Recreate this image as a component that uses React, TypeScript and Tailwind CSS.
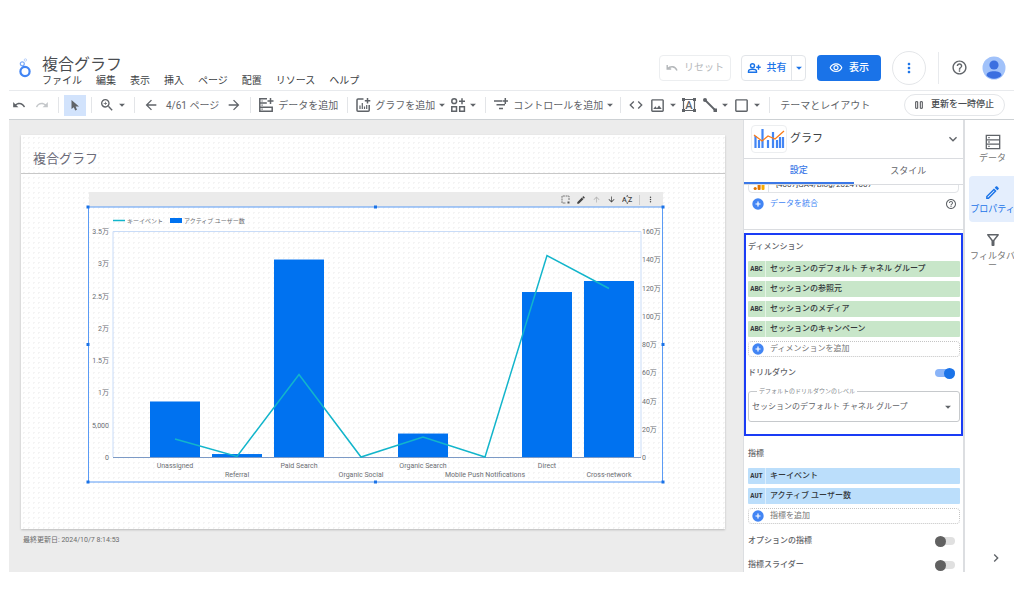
import { ReactNode, useState } from "react";
import {
  MdAdd,
  MdArrowBack,
  MdArrowDownward,
  MdArrowDropDown,
  MdArrowForward,
  MdArrowUpward,
  MdCheckBoxOutlineBlank,
  MdCode,
  MdEdit,
  MdHelpOutline,
  MdKeyboardArrowDown,
  MdKeyboardArrowRight,
  MdMoreVert,
  MdOutlineEdit,
  MdOutlineFilterAlt,
  MdOutlineImage,
  MdOutlineVisibility,
  MdRedo,
  MdUndo,
  MdZoomIn,
} from "react-icons/md";

const menus = ["ファイル", "編集", "表示", "挿入", "ページ", "配置", "リソース", "ヘルプ"];

const dimensions = [
  "セッションのデフォルト チャネル グループ",
  "セッションの参照元",
  "セッションのメディア",
  "セッションのキャンペーン",
];

const metrics = ["キーイベント", "アクティブ ユーザー数"];

// users は万単位
const channels = [
  { name: "Unassigned", users: 39.3, events: 2790 },
  { name: "Referral", users: 2.1, events: 80 },
  { name: "Paid Search", users: 139.8, events: 12780 },
  { name: "Organic Social", users: 0, events: 0 },
  { name: "Organic Search", users: 16.6, events: 3100 },
  { name: "Mobile Push Notifications", users: 0, events: 0 },
  { name: "Direct", users: 116.8, events: 31200 },
  { name: "Cross-network", users: 124.6, events: 26100 },
];

const leftTicks = ["0", "5,000", "1万", "1.5万", "2万", "2.5万", "3万", "3.5万"];
const rightTicks = ["0", "20万", "40万", "60万", "80万", "100万", "120万", "140万", "160万"];

function Logo() {
  return (
    <svg viewBox="0 0 14 20" className="h-5 w-3.5 shrink-0" fill="none" stroke="#4285f4">
      <circle cx="7" cy="13.5" r="4.6" strokeWidth="2.2" />
      <circle cx="4.3" cy="5.8" r="2" strokeWidth="1.2" stroke="#7baaf7" />
      <circle cx="7.4" cy="2" r="1.2" strokeWidth="0.8" stroke="#a8c7fa" />
      <path d="M4.8 8 6 9.6" strokeWidth="1.2" />
    </svg>
  );
}

function AddDataIcon() {
  return (
    <svg viewBox="0 0 16 16" className="size-4" fill="none" stroke="#5f6368" strokeWidth="1.5">
      <path d="M9 1.8H1.8v12.5h12.4V9.5M1.8 6h7M1.8 10.2h12.4M12.5 1v6M9.5 4h6" />
      <path d="M3.5 4h1.2M3.5 8.1h1.2M3.5 12.2h1.2" strokeWidth="1.2" />
    </svg>
  );
}

function AddChartIcon() {
  return (
    <svg viewBox="0 0 16 16" className="size-4" fill="none" stroke="#5f6368" strokeWidth="1.5">
      <path d="M8.5 2H3a1 1 0 0 0-1 1v10.2a1 1 0 0 0 1 1h10.2a1 1 0 0 0 1-1V8M12.5 1v5.5M9.8 3.8h5.5" />
      <path d="M5 12V8.5M7.3 12V6M9.5 12V9.5M11.7 12V8" strokeWidth="1.2" />
    </svg>
  );
}

function CommunityIcon() {
  return (
    <svg viewBox="0 0 16 16" className="size-4" fill="none" stroke="#5f6368" strokeWidth="1.5">
      <circle cx="4.2" cy="4.2" r="2.4" />
      <path d="M12 1.3v6M9 4.3h6M1.8 9.8h4.7v4.5H1.8zM9.7 9.8h4.7v4.5H9.7z" />
    </svg>
  );
}

function ControlIcon() {
  return (
    <svg viewBox="0 0 16 16" className="size-4" fill="none" stroke="#5f6368" strokeWidth="1.5">
      <path d="M1 4h8M3.5 7.8H12M6 11.6h4M12.3 1v6M9.5 4H15" />
    </svg>
  );
}

function TextBoxIcon() {
  return (
    <svg viewBox="0 0 16 16" className="size-4" fill="#5f6368">
      <path d="M2.5 2.5h11v11h-11z" fill="none" stroke="#5f6368" strokeWidth="1.2" />
      <path d="M1 1h3v3H1zM12 1h3v3h-3zM1 12h3v3H1zM12 12h3v3h-3z" />
      <text x="8" y="12" textAnchor="middle" className="text-[11px] font-medium">
        A
      </text>
    </svg>
  );
}

function LineIcon() {
  return (
    <svg viewBox="0 0 16 16" className="size-4" fill="#5f6368">
      <path d="m3 3 10 10" stroke="#5f6368" strokeWidth="1.8" />
      <circle cx="3" cy="3" r="2" />
      <path d="M11.5 11.5H15V15h-3.5z" />
    </svg>
  );
}

function SortIcon() {
  return (
    <svg viewBox="0 0 11 9" className="h-[9px] w-[11px]" fill="currentColor">
      <text x="0" y="7" className="text-[7px] font-medium">
        A
      </text>
      <text x="6" y="7" className="text-[7px] font-medium">
        Z
      </text>
      <path d="M4 1.5 5.3 0l1.3 1.5zM4 7.5 5.3 9l1.3-1.5z" />
    </svg>
  );
}

function ComboIcon() {
  return (
    <svg viewBox="0 0 34 26" className="h-[26px] w-[34px]" fill="none">
      <path
        d="M3.5 22V10M7 22v-8M10.5 22V3M16 22v-8M21 22V6M25 22v-8M28 22V11M31 22V11"
        stroke="#4285f4"
        strokeWidth="2.2"
      />
      <path d="m2 9 8 6 6-5 7 3 9-8" stroke="#fa7b17" strokeWidth="1.3" />
    </svg>
  );
}

function ServerIcon() {
  return (
    <svg viewBox="0 0 16 16" className="size-4" fill="none" stroke="#5f6368" strokeWidth="1.3">
      <path d="M1.3 1.3h13.4v13.4H1.3zM1.3 5.8h13.4M1.3 10.2h13.4" />
      <path d="M3.3 3.6h1.4M3.3 8h1.4M3.3 12.4h1.4" />
    </svg>
  );
}

function Avatar() {
  return (
    <svg viewBox="0 0 24 24" className="size-6">
      <circle cx="12" cy="12" r="11.5" fill="#a1c2fa" />
      <circle cx="12" cy="9" r="4.6" fill="#3b6fe0" />
      <path d="M4.5 19.5c0-3 3.5-4.3 7.5-4.3s7.5 1.3 7.5 4.3c-4 4.2-11 4.2-15 0Z" fill="#3b6fe0" />
    </svg>
  );
}

function Caret() {
  return <MdArrowDropDown className="-mx-1 size-3.5 shrink-0" />;
}

function Divider() {
  return <span className="h-4 w-px shrink-0 bg-[#e3e5e8]" />;
}

function Tool({ label, children }: { label: string; children: ReactNode }) {
  return (
    <button aria-label={label} className="flex shrink-0 items-center gap-1">
      {children}
    </button>
  );
}

function Header() {
  return (
    <header className="flex h-[46px] shrink-0 items-center border-b border-[#e8eaed] pr-2 pl-[9px]">
      <Logo />
      <div className="ml-2.5 flex-1 pt-1.5">
        <h1 className="text-base leading-5 text-[#4a4d51]">複合グラフ</h1>
        <nav className="flex gap-3.5 text-[10px] leading-3 text-[#3c4043]">
          {menus.map((menu) => (
            <button key={menu} className="shrink-0">
              {menu}
            </button>
          ))}
        </nav>
      </div>
      <button className="flex h-[26px] w-[72px] items-center justify-center gap-1.5 rounded-sm border border-[#eceef0] text-[10px] text-[#b4b7ba]">
        <svg viewBox="0 0 12 8" className="h-2 w-3" fill="none" stroke="currentColor" strokeWidth="1.4">
          <path d="M1.2 1v4h4M1.5 4.8C4 2 9 1.5 11 6.5" />
        </svg>
        リセット
      </button>
      <div className="ml-2.5 flex h-[26px] w-[65px] rounded-sm border border-[#e2e5e9] text-[10px] font-medium text-[#1a73e8]">
        <button className="flex flex-1 items-center justify-center gap-1.5">
          <svg viewBox="0 0 14 12" className="h-3 w-3.5" fill="none" stroke="currentColor" strokeWidth="1.4">
            <circle cx="5.5" cy="3.8" r="2" />
            <path d="M1.5 10.3V9.2c0-1.2 2-1.9 4-1.9s4 .7 4 1.9v1.1zM11.5 2.8v5M9.2 5.3h4.5" />
          </svg>
          共有
        </button>
        <button aria-label="共有オプション" className="flex w-3.5 items-center justify-center border-l border-[#e2e5e9]">
          <Caret />
        </button>
      </div>
      <button className="ml-[11px] flex h-[26px] w-16 items-center justify-center gap-1.5 rounded-sm bg-[#1a73e8] text-[10px] font-medium text-white">
        <MdOutlineVisibility className="size-3.5" />
        表示
      </button>
      <button
        aria-label="その他"
        className="ml-[11px] flex size-[34px] items-center justify-center rounded-full border border-[#e4e6e9] text-[#1a73e8]"
      >
        <MdMoreVert className="size-4" />
      </button>
      <span className="mx-3 h-8 w-px bg-[#e8eaed]" />
      <button aria-label="ヘルプ" className="text-[#5f6368]">
        <MdHelpOutline className="size-[17px]" />
      </button>
      <button aria-label="アカウント" className="ml-3.5">
        <Avatar />
      </button>
    </header>
  );
}

function Toolbar() {
  return (
    <div className="flex h-[29px] shrink-0 items-center border-b border-[#cdd1d4] px-[3px] text-[10px] whitespace-nowrap text-[#5f6368]">
      <div className="flex shrink-0 items-center gap-[9px] pr-[9px]">
        <Tool label="元に戻す">
          <MdUndo className="size-3.5" />
        </Tool>
        <Tool label="やり直す">
          <MdRedo className="size-3.5 text-[#c4c7ca]" />
        </Tool>
      </div>
      <Divider />
      <button
        aria-label="選択"
        className="mx-[5px] flex h-[21px] w-[22px] shrink-0 items-center justify-center bg-[#d2e3fc]"
      >
        <svg viewBox="0 0 10 12" className="h-3 w-2.5" fill="#5f6368">
          <path d="M1.5 1v9l2.3-1.8 1.4 3.3 1.8-.8-1.4-3.1H9z" />
        </svg>
      </button>
      <Divider />
      <div className="flex shrink-0 items-center pr-[9px] pl-[7px]">
        <Tool label="ズーム">
          <MdZoomIn className="size-4" />
          <Caret />
        </Tool>
      </div>
      <Divider />
      <div className="flex shrink-0 items-center gap-[7px] px-2">
        <Tool label="前のページ">
          <MdArrowBack className="size-4" />
        </Tool>
        <span>4/61 ページ</span>
        <Tool label="次のページ">
          <MdArrowForward className="size-4" />
        </Tool>
      </div>
      <Divider />
      <div className="flex shrink-0 items-center pr-[9px] pl-[7px]">
        <Tool label="データを追加">
          <AddDataIcon />
          <span>データを追加</span>
        </Tool>
      </div>
      <Divider />
      <div className="flex shrink-0 items-center gap-[5px] pr-[9px] pl-[7px]">
        <Tool label="グラフを追加">
          <AddChartIcon />
          <span>グラフを追加</span>
          <Caret />
        </Tool>
        <Tool label="コミュニティ ビジュアリゼーション">
          <CommunityIcon />
          <Caret />
        </Tool>
      </div>
      <Divider />
      <div className="flex shrink-0 items-center px-[7px]">
        <Tool label="コントロールを追加">
          <ControlIcon />
          <span>コントロールを追加</span>
          <Caret />
        </Tool>
      </div>
      <Divider />
      <div className="flex shrink-0 items-center gap-[5px] pr-[9px] pl-[7px]">
        <Tool label="URL の埋め込み">
          <MdCode className="size-4" />
        </Tool>
        <Tool label="画像">
          <MdOutlineImage className="size-[17px]" />
          <Caret />
        </Tool>
        <Tool label="テキスト">
          <TextBoxIcon />
        </Tool>
        <Tool label="線">
          <LineIcon />
          <Caret />
        </Tool>
        <Tool label="図形">
          <MdCheckBoxOutlineBlank className="size-[17px]" />
          <Caret />
        </Tool>
      </div>
      <Divider />
      <button className="ml-2.5">テーマとレイアウト</button>
      <button className="mr-1.5 ml-auto flex h-[22px] shrink-0 items-center gap-2 rounded-full border border-[#e4e6e9] px-2.5 text-[9px] font-medium text-[#4a4d51]">
        <svg viewBox="0 0 8 8" className="size-2" fill="none" stroke="currentColor">
          <path d="M.7.7h2v6.6h-2zM5.3.7h2v6.6h-2z" />
        </svg>
        更新を一時停止
      </button>
    </div>
  );
}

function ComboChart() {
  const base = 250;
  const height = 226;
  const centerX = (i: number) => 87 + i * 62;
  const userHeight = (v: number) => (v / 160) * height;
  const points = channels
    .map((c, i) => `${centerX(i)},${base - (c.events / 35000) * height}`)
    .join(" ");

  return (
    <svg viewBox="0 0 575 275" className="block w-full overflow-visible text-[7px]" fill="#6b6e73">
      <path d="M25 250V24.5H553V250" fill="none" stroke="#c9dcf8" />
      <path d="M25 13.5h12" stroke="#12b5cb" strokeWidth="1.5" />
      <text x="39" y="16" className="text-[6px]">
        キーイベント
      </text>
      <rect x="82" y="11" width="12" height="5" fill="#0072f0" />
      <text x="96" y="16" className="text-[6px]">
        アクティブ ユーザー数
      </text>

      {leftTicks.map((tick, i) => (
        <text key={tick} x="21" y={base + 3 - (i * height) / 7} textAnchor="end">
          {tick}
        </text>
      ))}
      {rightTicks.map((tick, i) => (
        <text key={tick} x="554" y={base + 3 - (i * height) / 8}>
          {tick}
        </text>
      ))}

      {channels.map((c, i) => (
        <rect
          key={c.name}
          x={centerX(i) - 25}
          y={base - userHeight(c.users)}
          width="50"
          height={userHeight(c.users)}
          fill="#0072f0"
        />
      ))}
      <path d="M25 250.5h528" stroke="#7c9ac6" />
      <polyline points={points} fill="none" stroke="#12b5cb" strokeWidth="1.5" />
      {channels.map((c, i) => (
        <text key={c.name} x={centerX(i)} y={i % 2 ? 270 : 261} textAnchor="middle">
          {c.name}
        </text>
      ))}

      <rect x="0.5" y="0" width="574" height="275" fill="none" stroke="#5b9bf5" />
      {[0, 287.5, 575].map((x) =>
        [0, 137.5, 275].map((y) =>
          x === 287.5 && y === 137.5 ? null : (
            <rect key={`${x}-${y}`} x={x - 1.5} y={y - 1.5} width="3" height="3" fill="#1a73e8" />
          ),
        ),
      )}
    </svg>
  );
}

function Canvas() {
  return (
    <main className="min-w-0 flex-1 overflow-hidden bg-[#ececec] pt-[15px] pr-[18px] pl-3">
      <section className="aspect-[704/394] bg-white bg-[radial-gradient(#f4f4f4_1px,transparent_1px)] bg-[size:5px_5px] shadow-[0_1px_2px_#bbbbbb]">
        <h2 className="flex h-[39px] items-end border-b border-[#c8c8c8] pb-1 pl-3 text-[13px] leading-5 text-[#6b6b78]">
          複合グラフ
        </h2>
        <div className="mt-[18px] mr-[62px] ml-[67px]">
          <div className="ml-px flex h-[15px] items-center justify-end gap-1.5 bg-[#ebebeb] pr-2 text-[#444444]">
            <button aria-label="選択範囲">
              <svg viewBox="0 0 9 9" className="size-[9px]" fill="none" stroke="#777777">
                <path d="M8 5V1H1v7h4" strokeDasharray="2 .7" />
                <path d="M6.5 6.5h2v2h-2z" fill="#555555" stroke="none" />
              </svg>
            </button>
            <button aria-label="編集">
              <MdEdit className="size-[10px]" />
            </button>
            <button aria-label="ドリルアップ" className="text-[#b4b4b4]">
              <MdArrowUpward className="size-[9px]" />
            </button>
            <button aria-label="ドリルダウン">
              <MdArrowDownward className="size-[9px]" />
            </button>
            <button aria-label="並べ替え">
              <SortIcon />
            </button>
            <span className="h-2.5 w-px bg-[#cccccc]" />
            <button aria-label="その他">
              <MdMoreVert className="size-[9px]" />
            </button>
          </div>
          <ComboChart />
        </div>
      </section>
      <p className="mt-1.5 ml-0.5 text-[7px] leading-[10px] text-[#6b6b6b]">
        最終更新日: 2024/10/7 8:14:53
      </p>
    </main>
  );
}

function DimensionChip({ name }: { name: string }) {
  return (
    <button className="flex h-4 w-full items-center rounded-[1px] bg-[#c8e6c9] text-left text-[8px] font-medium text-[#33383b]">
      <span className="flex h-full w-[18px] items-center justify-center border-r border-[#e4f3e5] font-[Liberation_Mono,monospace] text-[7px] font-bold">
        ABC
      </span>
      <span className="ml-1">{name}</span>
    </button>
  );
}

function MetricChip({ name }: { name: string }) {
  return (
    <button className="flex h-4 w-full items-center rounded-[1px] bg-[#bbdefb] text-left text-[8px] font-medium text-[#33383b]">
      <span className="flex h-full w-[18px] items-center justify-center border-r border-[#dceefd] font-[Liberation_Mono,monospace] text-[7px] font-bold">
        AUT
      </span>
      <span className="ml-1">{name}</span>
    </button>
  );
}

function PlusBadge() {
  return (
    <svg viewBox="0 0 12 12" className="mr-1.5 size-3 shrink-0">
      <circle cx="6" cy="6" r="5.7" fill="#4285f4" />
      <path d="M6 3.5v5M3.5 6h5" stroke="#ffffff" strokeWidth="1.2" />
    </svg>
  );
}

function AddField({ label }: { label: string }) {
  return (
    <button className="flex h-4 w-full items-center rounded-sm border border-dotted border-[#c4c4c4] pl-[3px] text-[8px] text-[#757575]">
      <PlusBadge />
      {label}
    </button>
  );
}

function Switch({ label, defaultOn = false }: { label: string; defaultOn?: boolean }) {
  const [on, setOn] = useState(defaultOn);
  return (
    <label className="flex h-3 items-center justify-between pr-[5px] text-[8px] font-medium text-[#5f6368]">
      {label}
      <input
        type="checkbox"
        role="switch"
        checked={on}
        onChange={() => setOn(!on)}
        className="flex h-2 w-5 appearance-none items-center rounded-full bg-[#e0e0e0] before:size-[11px] before:rounded-full before:bg-[#616161] checked:justify-end checked:bg-[#8ab4f8] checked:before:bg-[#1a73e8]"
      />
    </label>
  );
}

function PropertyPanel() {
  return (
    <aside className="flex w-[222px] shrink-0 flex-col overflow-hidden border-r-2 border-l border-[#dcdee1] bg-white">
      <div className="flex h-[39px] shrink-0 items-center border-b border-[#dadce0] pr-0.5 pl-[7px]">
        <span className="rounded-sm border border-[#eceef0]">
          <ComboIcon />
        </span>
        <h2 className="ml-[3px] flex-1 text-[11px] text-[#3c4043]">グラフ</h2>
        <button aria-label="グラフの種類" className="text-[#5f6368]">
          <MdKeyboardArrowDown className="size-4" />
        </button>
      </div>
      <div role="tablist" className="flex h-[26px] shrink-0 border-b border-[#dadce0] text-[9px] text-[#5f6368]">
        <button role="tab" aria-selected="true" className="flex-1 border-b-2 border-[#3b78e7] font-medium text-[#3b78e7]">
          設定
        </button>
        <button role="tab" aria-selected="false" className="flex-1">
          スタイル
        </button>
      </div>

      <div className="min-h-0 flex-1 overflow-hidden">
        <div className="flow-root h-[45px] border-b border-[#dadce0] px-1">
          <div className="-mt-2 flex h-4 items-center rounded-sm border border-[#e2e4e7] text-[8px] leading-3 text-[#3c4043]">
            <span className="flex h-full w-5 items-center justify-center border-r border-[#e2e4e7]">
              <svg viewBox="0 0 12 12" className="size-3">
                <circle cx="2.2" cy="9.5" r="1.6" fill="#e37400" />
                <rect x="4.6" y="5" width="3" height="6" rx="1" fill="#e37400" />
                <rect x="8.5" y="1" width="3" height="10" rx="1" fill="#f9ab00" />
              </svg>
            </span>
            <span className="ml-[7px] flex-1">[4007]GA4/Blog/20241007</span>
          </div>
          <div className="mt-[5px] flex h-3 items-center pr-0.5 pl-1 text-[8px]">
            <button className="flex items-center text-[#4285f4]">
              <PlusBadge />
              データを統合
            </button>
            <button aria-label="統合のヘルプ" className="ml-auto text-[#5f6368]">
              <MdHelpOutline className="size-3" />
            </button>
          </div>
        </div>

        <section className="mt-[3px] border-2 border-[#1a3cf5] pt-1 pr-px pb-3 pl-0.5">
          <h3 className="text-[8px] leading-4 font-medium text-[#5f6368]">ディメンション</h3>
          <div className="mt-1.5 flex flex-col gap-1">
            {dimensions.map((name) => (
              <DimensionChip key={name} name={name} />
            ))}
            <AddField label="ディメンションを追加" />
          </div>
          <div className="mt-2.5">
            <Switch label="ドリルダウン" defaultOn />
          </div>
          <fieldset className="relative mt-2 rounded-[3px] border border-[#c6c9cc]">
            <legend className="ml-2 px-0.5 text-[6px] leading-2 text-[#80868b]">
              <label htmlFor="drill-level">デフォルトのドリルダウンのレベル</label>
            </legend>
            <select
              id="drill-level"
              className="mb-0.5 block h-6 w-full appearance-none pr-4 pl-[3px] text-[8px] text-[#5f6368]"
            >
              {dimensions.map((name) => (
                <option key={name}>{name}</option>
              ))}
            </select>
            <MdArrowDropDown className="pointer-events-none absolute top-[5px] right-1 size-3.5 text-[#5f6368]" />
          </fieldset>
        </section>

        <section className="pt-2.5 pr-[3px] pl-1">
          <h3 className="text-[8px] leading-4 font-medium text-[#5f6368]">指標</h3>
          <div className="mt-1.5 mb-[11px] flex flex-col gap-1">
            {metrics.map((name) => (
              <MetricChip key={name} name={name} />
            ))}
            <AddField label="指標を追加" />
          </div>
          <div className="flex flex-col gap-3">
            <Switch label="オプションの指標" />
            <Switch label="指標スライダー" />
          </div>
        </section>
      </div>
    </aside>
  );
}

function Rail() {
  return (
    <nav className="flex w-[49px] shrink-0 flex-col overflow-hidden pl-1 text-[9px] leading-[9px] text-[#757575]">
      <button className="flex h-[47px] flex-col items-center gap-1 pt-3.5 pl-0.5">
        <ServerIcon />
        データ
      </button>
      <button className="mt-[9px] flex h-[46px] flex-col items-center gap-1 rounded-l-sm bg-[#e4eefd] pt-2 pl-0.5 whitespace-nowrap text-[#1a73e8]">
        <MdOutlineEdit className="size-[17px] shrink-0" />
        プロパティ
      </button>
      <button className="mt-[9px] flex flex-col items-center gap-[3px] pl-0.5">
        <MdOutlineFilterAlt className="size-[18px] shrink-0 text-[#5f6368]" />
        <span className="w-[45px] break-all">フィルタバー</span>
      </button>
      <button aria-label="パネルを閉じる" className="mt-auto mb-1.5 ml-2 self-center text-[#5f6368]">
        <MdKeyboardArrowRight className="size-4" />
      </button>
    </nav>
  );
}

export default function App() {
  return (
    <div
      lang="ja"
      className="flex h-screen flex-col bg-white pt-[45px] pr-2.5 pb-[42px] pl-[9px] font-[Roboto,'Noto_Sans_CJK_JP',sans-serif]"
    >
      <Header />
      <Toolbar />
      <div className="flex min-h-0 flex-1">
        <Canvas />
        <PropertyPanel />
        <Rail />
      </div>
    </div>
  );
}
